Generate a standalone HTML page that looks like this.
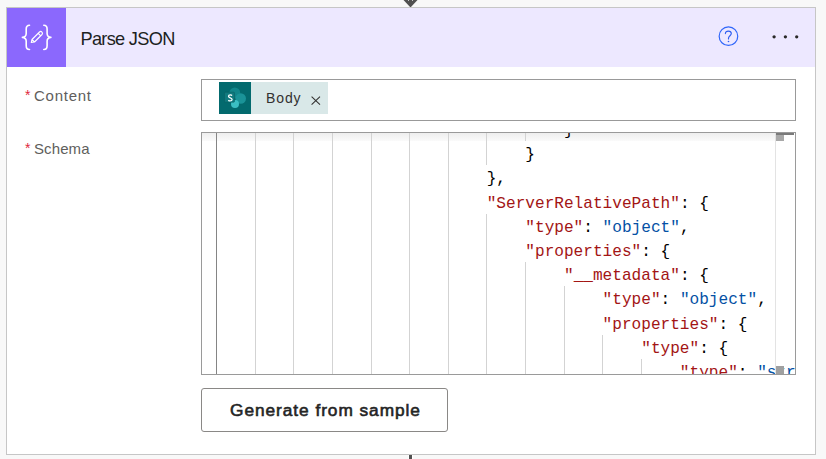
<!DOCTYPE html>
<html><head><meta charset="utf-8">
<style>
*{margin:0;padding:0;box-sizing:border-box}
html,body{width:826px;height:459px;overflow:hidden;background:#f8f8f8;font-family:"Liberation Sans",sans-serif}
.abs{position:absolute}
#card{position:absolute;left:6px;top:7px;width:810px;height:448px;background:#fff;border:1px solid #c6c6c6}
#hdr{position:absolute;left:7px;top:8px;width:808px;height:59px;background:#ede8ff}
#ico{position:absolute;left:7px;top:8px;width:59px;height:59px;background:#8b68fd}
#title{position:absolute;left:80.5px;top:29px;font-size:18.2px;letter-spacing:-0.7px;color:#201f1e;white-space:nowrap;line-height:20px}
.lbl{position:absolute;left:34px;font-size:14px;color:#605e5c;white-space:nowrap;line-height:16px;letter-spacing:0.9px}
.ast{position:absolute;left:25px;font-size:14px;color:#e0283c;line-height:16px}
#inp{position:absolute;left:201px;top:79px;width:595px;height:42px;border:1px solid #999999;background:#fff}
#tok{position:absolute;left:219px;top:82px;width:109px;height:32px;background:#d9e8e8}
#tokico{position:absolute;left:219px;top:82px;width:32px;height:32px;background:#036a6e}
#body{position:absolute;left:266px;top:90px;font-size:14px;color:#323130;line-height:16px;letter-spacing:0.9px}
#ed{position:absolute;left:201px;top:132px;width:595px;height:243px;border:1px solid #9a9a9a;background:#fff;overflow:hidden}
.g{position:absolute;width:1px;background:#d4d4d4}
.ln{position:absolute;left:15.3px;height:24.2px;line-height:24.2px;font-family:"Liberation Mono",monospace;font-size:16.1px;white-space:pre;color:#000}
.k{color:#a31515}
.s{color:#0451a5}
#btn{position:absolute;left:201px;top:388px;width:247px;height:44px;border:1px solid #8a8886;border-radius:3px;background:#fff}
#btntxt{position:absolute;left:230px;top:401px;font-size:17.3px;font-weight:400;-webkit-text-stroke:0.6px #242424;color:#242424;white-space:nowrap;line-height:18px;letter-spacing:0.95px}
</style></head><body>
<!-- top arrow -->
<svg class="abs" style="left:0;top:0" width="826" height="459">
  <polygon points="403.5,0 417.5,0 410.5,7.5" fill="#505050"/>
  <rect x="408" y="0" width="1" height="1" fill="#c8c8c8"/><rect x="412" y="0" width="1" height="1" fill="#c8c8c8"/>
</svg>
<div id="card"></div>
<div id="hdr"></div>
<div id="ico"></div>
<svg class="abs" style="left:7px;top:8px" width="59" height="59" viewBox="0 0 59 59">
  <g fill="none" stroke="#fff" stroke-linecap="round" stroke-linejoin="round">
    <path stroke-width="1.6" d="M22.5,17.3 C20.2,17.3 19.2,18.8 19.2,21 L19.2,25.5 C19.2,27.6 18.2,29.1 15.4,29.4 C18.2,29.7 19.2,31.2 19.2,33.3 L19.2,37.8 C19.2,40 20.2,41.5 22.5,41.5"/>
    <path stroke-width="1.6" d="M36.8,17.3 C39.1,17.3 40.1,18.8 40.1,21 L40.1,25.5 C40.1,27.6 41.1,29.1 43.9,29.4 C41.1,29.7 40.1,31.2 40.1,33.3 L40.1,37.8 C40.1,40 39.1,41.5 36.8,41.5"/>
    <path stroke-width="1.15" d="M24.3,34.4 L25,31.5 L32.5,24 A1.77,1.77 0 0 1 35,26.5 L27.5,34 Z M31.2,25.3 L33.7,27.8 M25,31.5 L27.5,34"/>
  </g>
</svg>
<div id="title">Parse JSON</div>
<!-- help icon -->
<svg class="abs" style="left:716px;top:24px" width="24" height="24" viewBox="0 0 24 24">
  <circle cx="12.45" cy="12.15" r="9.3" fill="none" stroke="#2f66fa" stroke-width="1.2"/>
  <path d="M9.4,9.6 C9.4,8 10.6,7.1 12.3,7.1 C14,7.1 15.3,8.1 15.3,9.6 C15.3,11.6 12.5,11.9 12.5,14.3 L12.5,15" fill="none" stroke="#2f5ef0" stroke-width="1.15" stroke-linecap="round"/>
  <circle cx="12.5" cy="17.5" r="0.8" fill="#2f5ef0"/>
</svg>
<svg class="abs" style="left:760px;top:28px" width="50" height="18">
  <circle cx="14.1" cy="8.8" r="1.65" fill="#2a2928"/>
  <circle cx="25.4" cy="8.8" r="1.65" fill="#2a2928"/>
  <circle cx="36.7" cy="8.8" r="1.65" fill="#2a2928"/>
</svg>

<span class="ast" style="top:87px">*</span>
<div class="lbl" style="top:87.6px;font-size:15px;letter-spacing:0.75px">Content</div>
<span class="ast" style="top:140px">*</span>
<div class="lbl" style="top:141px;font-size:15px;letter-spacing:0.1px">Schema</div>

<div id="inp"></div>
<div id="tok"></div>
<div id="tokico"></div>
<svg class="abs" style="left:219px;top:82px" width="32" height="32" viewBox="0 0 32 32">
  <circle cx="15.8" cy="10.8" r="5.4" fill="#11858a"/>
  <circle cx="21.7" cy="16.5" r="5.3" fill="#1a9398"/>
  <circle cx="16" cy="22" r="4" fill="#3bbfc3"/>
  <rect x="5.5" y="10.2" width="10" height="10" rx="0.8" fill="#107a7e" stroke="#0a5a5e" stroke-width="0.5"/>
  <path d="M13.1,13.5 C12.6,13 12,12.9 11.3,12.9 C10.2,12.9 9.5,13.5 9.5,14.3 C9.5,16.1 13.1,15.5 13.1,17.4 C13.1,18.3 12.3,18.9 11.2,18.9 C10.4,18.9 9.8,18.7 9.3,18.2" fill="none" stroke="#fff" stroke-width="1.25"/>
</svg>
<div id="body">Body</div>
<svg class="abs" style="left:310px;top:95px" width="12" height="11">
  <path d="M1.6,1.6 L10,9.6 M10,1.6 L1.6,9.6" stroke="#323130" stroke-width="1.05"/>
</svg>

<div id="ed">
<div class="abs" style="left:0;top:0;width:573px;height:8px;background:linear-gradient(#eeeeee,#fafafa)"></div>
<div class="g" style="left:14px;top:0.0px;height:241.0px;background:#858585"></div>
<div class="g" style="left:53px;top:0.0px;height:241.0px;background:#d3d3d3"></div>
<div class="g" style="left:91px;top:0.0px;height:241.0px;background:#d3d3d3"></div>
<div class="g" style="left:130px;top:0.0px;height:241.0px;background:#d3d3d3"></div>
<div class="g" style="left:169px;top:0.0px;height:241.0px;background:#d3d3d3"></div>
<div class="g" style="left:207px;top:0.0px;height:241.0px;background:#d3d3d3"></div>
<div class="g" style="left:246px;top:0.0px;height:241.0px;background:#d3d3d3"></div>
<div class="g" style="left:284px;top:0.0px;height:32.4px;background:#d3d3d3"></div>
<div class="g" style="left:284px;top:80.8px;height:160.2px;background:#d3d3d3"></div>
<div class="g" style="left:323px;top:0.0px;height:8.2px;background:#d3d3d3"></div>
<div class="g" style="left:323px;top:129.2px;height:111.8px;background:#d3d3d3"></div>
<div class="g" style="left:362px;top:153.4px;height:87.6px;background:#d3d3d3"></div>
<div class="g" style="left:400px;top:201.8px;height:39.2px;background:#d3d3d3"></div>
<div class="g" style="left:439px;top:226.0px;height:15.0px;background:#d3d3d3"></div>
<div class="ln" style="left:361.97px;top:-14.00px"><span>}</span></div>
<div class="ln" style="left:323.34px;top:10.20px"><span>}</span></div>
<div class="ln" style="left:284.71px;top:34.40px"><span>},</span></div>
<div class="ln" style="left:284.71px;top:58.60px"><span class="k">"ServerRelativePath"</span>: {</div>
<div class="ln" style="left:323.34px;top:82.80px"><span class="k">"type"</span>: <span class="s">"object"</span>,</div>
<div class="ln" style="left:323.34px;top:107.00px"><span class="k">"properties"</span>: {</div>
<div class="ln" style="left:361.97px;top:131.20px"><span class="k">"__metadata"</span>: {</div>
<div class="ln" style="left:400.60px;top:155.40px"><span class="k">"type"</span>: <span class="s">"object"</span>,</div>
<div class="ln" style="left:400.60px;top:179.60px"><span class="k">"properties"</span>: {</div>
<div class="ln" style="left:439.23px;top:203.80px"><span class="k">"type"</span>: {</div>
<div class="ln" style="left:477.86px;top:228.00px"><span class="k">"type"</span>: <span class="s">"string"</span></div>
<div class="abs" style="left:573px;top:0;width:1px;height:241px;background:#e3e3e3"></div>
<div class="abs" style="left:574px;top:0;width:18px;height:2px;background:#7a7a7a"></div>
<div class="abs" style="left:574px;top:2px;width:8px;height:6px;background:#a8a8a8"></div>
<div class="abs" style="left:574px;top:233px;width:8px;height:8px;background:#a0a0a0"></div>
</div>

<div id="btn"></div>
<div id="btntxt">Generate from sample</div>

<!-- bottom stem -->
<div class="abs" style="left:408px;top:455px;width:5px;height:4px;background:#fff"></div>
<div class="abs" style="left:409px;top:455px;width:3px;height:4px;background:#505050"></div>
</body></html>
